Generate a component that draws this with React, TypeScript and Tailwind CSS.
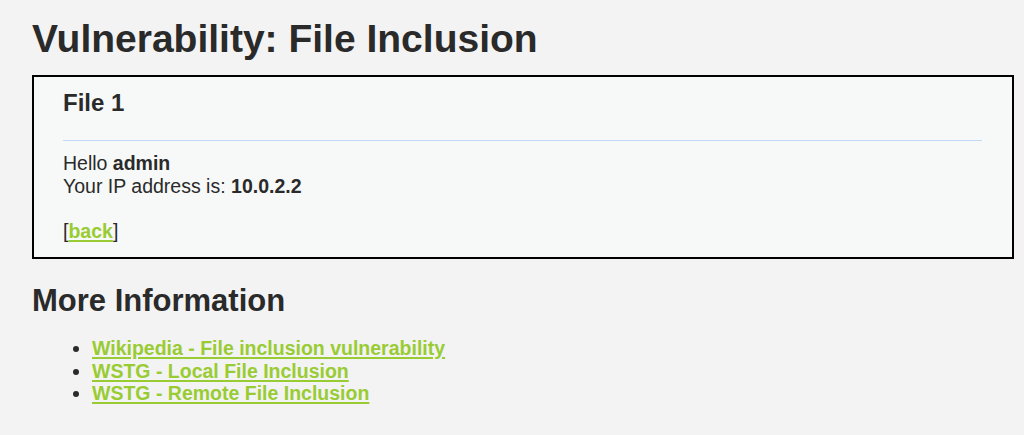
export default function App() {
  const font = { fontFamily: '"Liberation Sans", Arial, sans-serif' };
  return (
    <div
      className="min-h-[435px] w-[1024px] bg-[#f3f3f3] text-[#2a2a2a] font-['Liberation_Sans',Arial,sans-serif]"
      style={font}
    >
      <div className="pl-[32px] pr-[10px] pt-[19px]">
        <h1 className="text-[39px] leading-[39px] font-bold text-[#2a2a2a]">Vulnerability: File Inclusion</h1>
        <div className="mt-[17px] h-[184px] border-2 border-black bg-[#f7f8f8] pl-[29px] pr-[30px] pt-[12px]">
          <h3 className="text-[24px] leading-[28px] font-bold">File 1</h3>
          <div className="mt-[23px] h-px bg-[#c4d8fa]"></div>
          <div className="mt-[11px] text-[19.5px] leading-[23px]">
            <div>
              Hello <span className="font-bold">admin</span>
            </div>
            <div>
              Your IP address is: <span className="font-bold">10.0.2.2</span>
            </div>
            <div className="mt-[22px]">
              [<a href="#" className="text-[#99cc33] underline font-bold decoration-[2px] underline-offset-[2px]">back</a>]
            </div>
          </div>
        </div>
        <h2 className="mt-[24px] text-[31px] leading-[36px] font-bold">More Information</h2>
        <ul className="mt-[18px] pl-[60px] list-disc text-[19.5px] leading-[22.5px] marker:text-[#2a2a2a]">
          <li>
            <a href="#" className="text-[#99cc33] underline font-bold decoration-[2px] underline-offset-[2px]">Wikipedia - File inclusion vulnerability</a>
          </li>
          <li>
            <a href="#" className="text-[#99cc33] underline font-bold decoration-[2px] underline-offset-[2px]">WSTG - Local File Inclusion</a>
          </li>
          <li>
            <a href="#" className="text-[#99cc33] underline font-bold decoration-[2px] underline-offset-[2px]">WSTG - Remote File Inclusion</a>
          </li>
        </ul>
      </div>
    </div>
  );
}
